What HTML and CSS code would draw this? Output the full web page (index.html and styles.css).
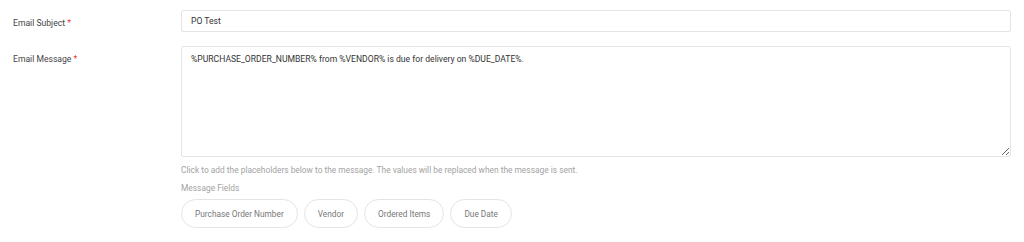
FILE: index.html
```html
<!DOCTYPE html>
<html lang="en">
<head>
    <meta charset="UTF-8">
    <title>Email Settings</title>
    <link rel="stylesheet" href="styles.css">
</head>
<body>
    <form class="email-form">
        <!-- Subject -->
        <div class="form-row">
            <label class="form-label" for="subject">Email Subject <span class="req">*</span></label>
            <div class="form-field">
                <input type="text" id="subject" class="form-input" value="PO Test">
            </div>
        </div>

        <!-- Message -->
        <div class="form-row">
            <label class="form-label" for="message">Email Message <span class="req">*</span></label>
            <div class="form-field">
                <textarea id="message" class="form-textarea">%PURCHASE_ORDER_NUMBER% from %VENDOR% is due for delivery on %DUE_DATE%.</textarea>
                <p class="help-text">Click to add the placeholders below to the message. The values will be replaced when the message is sent.</p>
                <p class="help-text fields-title">Message Fields</p>
                <div class="chips">
                    <button type="button" class="chip">Purchase Order Number</button>
                    <button type="button" class="chip">Vendor</button>
                    <button type="button" class="chip">Ordered Items</button>
                    <button type="button" class="chip">Due Date</button>
                </div>
            </div>
        </div>
    </form>
</body>
</html>
```

FILE: styles.css
```css
/* General Styling */
body {
    margin: 0;
    padding: 0;
    background-color: #fff;
    font-family: Roboto, 'Noto Sans', sans-serif;
    font-size: 8.6px;
    color: #444;
}

.email-form {
    padding: 10px 13px 0 13px;
}

.form-row {
    display: grid;
    grid-template-columns: 168px 1fr;
    margin-bottom: 14px;
}

.form-label {
    padding-top: 8px;
    color: #444;
}

.req {
    color: #e53935;
}

.form-input,
.form-textarea {
    display: block;
    width: 100%;
    box-sizing: border-box;
    border: 1px solid #e4e4e4;
    border-radius: 2px;
    font-family: inherit;
    font-size: 8.6px;
    color: #333;
    padding: 0 9px;
    margin: 0;
    background: #fff;
}

.form-input {
    height: 22px;
}

.form-textarea {
    height: 111px;
    padding-top: 7px;
    resize: vertical;
}

.help-text {
    margin: 8px 0 0 0;
    color: #a3a3a3;
    font-size: 8.4px;
}

.fields-title {
    margin-top: 8px;
}

.chips {
    display: flex;
    gap: 6px;
    margin-top: 6px;
}

.chip {
    height: 29px;
    padding: 0 13px;
    border: 1px solid #e4e4e4;
    border-radius: 15px;
    background: #fff;
    font-family: inherit;
    font-size: 8.3px;
    color: #777;
    cursor: pointer;
}
```
